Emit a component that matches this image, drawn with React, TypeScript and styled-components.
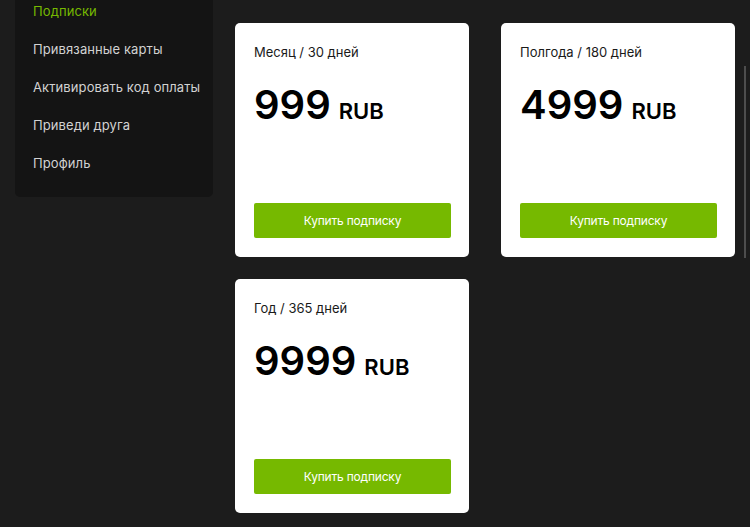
import React from 'react';
import styled, { createGlobalStyle } from 'styled-components';

const colors = {
    page: '#1c1c1c',
    panel: '#141414',
    green: '#76b900',
    menu: '#d2d2d2',
    white: '#ffffff',
    text: '#1a1a1a',
};

const GlobalStyle = createGlobalStyle`
  html, body {
    margin: 0;
    padding: 0;
    background: ${colors.page};
    height: 100%;
    overflow: hidden;
  }
  body {
    font-family: Inter, "Noto Sans", sans-serif;
  }
`;

const Page = styled.div`
  position: relative;
  display: flex;
  align-items: flex-start;
  gap: 22px;
  padding-left: 15px;
  height: 527px;
`;

const Sidebar = styled.nav`
  width: 198px;
  box-sizing: border-box;
  display: flex;
  flex-direction: column;
  gap: 16px;
  padding: 0 18px 23px;
  background: ${colors.panel};
  border-radius: 0 0 5px 5px;
`;

const MenuItem = styled.a<{ $active?: boolean }>`
  display: block;
  font-size: 13px;
  line-height: 22px;
  letter-spacing: 0.1px;
  color: ${p => (p.$active ? colors.green : colors.menu)};
  text-decoration: none;
  white-space: nowrap;
`;

const Plans = styled.div`
  display: grid;
  grid-template-columns: 234px 234px;
  column-gap: 32px;
  row-gap: 22px;
  padding-top: 23px;
`;

const Card = styled.div`
  height: 234px;
  box-sizing: border-box;
  display: flex;
  flex-direction: column;
  padding: 21px 18px 19px 19px;
  background: ${colors.white};
  border-radius: 5px;
`;

const Period = styled.div`
  font-size: 13px;
  line-height: 16px;
  color: ${colors.text};
`;

const Price = styled.div`
  display: flex;
  align-items: baseline;
  gap: 8px;
  margin-top: 23px;
  color: #000;
`;

const Amount = styled.span`
  font-size: 40px;
  line-height: 44px;
  font-weight: 600;
`;

const Currency = styled.span`
  font-size: 22px;
  font-weight: 600;
`;

const BuyButton = styled.button`
  margin-top: auto;
  height: 35px;
  width: 100%;
  border: none;
  border-radius: 2px;
  background: ${colors.green};
  color: ${colors.white};
  font-family: inherit;
  font-size: 12px;
  letter-spacing: -0.2px;
  cursor: pointer;
`;

const ScrollThumb = styled.div`
  position: absolute;
  right: 4px;
  top: 66px;
  width: 2px;
  height: 192px;
  background: #4d4d4d;
`;

const menu = ['Подписки', 'Привязанные карты', 'Активировать код оплаты', 'Приведи друга', 'Профиль'];

const plans = [
    { period: 'Месяц / 30 дней', amount: '999' },
    { period: 'Полгода / 180 дней', amount: '4999' },
    { period: 'Год / 365 дней', amount: '9999' },
];

export default function App(): JSX.Element {
    return (
        <>
            <GlobalStyle />
            <Page>
                <Sidebar>
                    {menu.map((label, i) => (
                        <MenuItem key={label} $active={i === 0}>{label}</MenuItem>
                    ))}
                </Sidebar>
                <Plans>
                    {plans.map(plan => (
                        <Card key={plan.period}>
                            <Period>{plan.period}</Period>
                            <Price>
                                <Amount>{plan.amount}</Amount>
                                <Currency>RUB</Currency>
                            </Price>
                            <BuyButton>Купить подписку</BuyButton>
                        </Card>
                    ))}
                </Plans>
                <ScrollThumb />
            </Page>
        </>
    );
}
